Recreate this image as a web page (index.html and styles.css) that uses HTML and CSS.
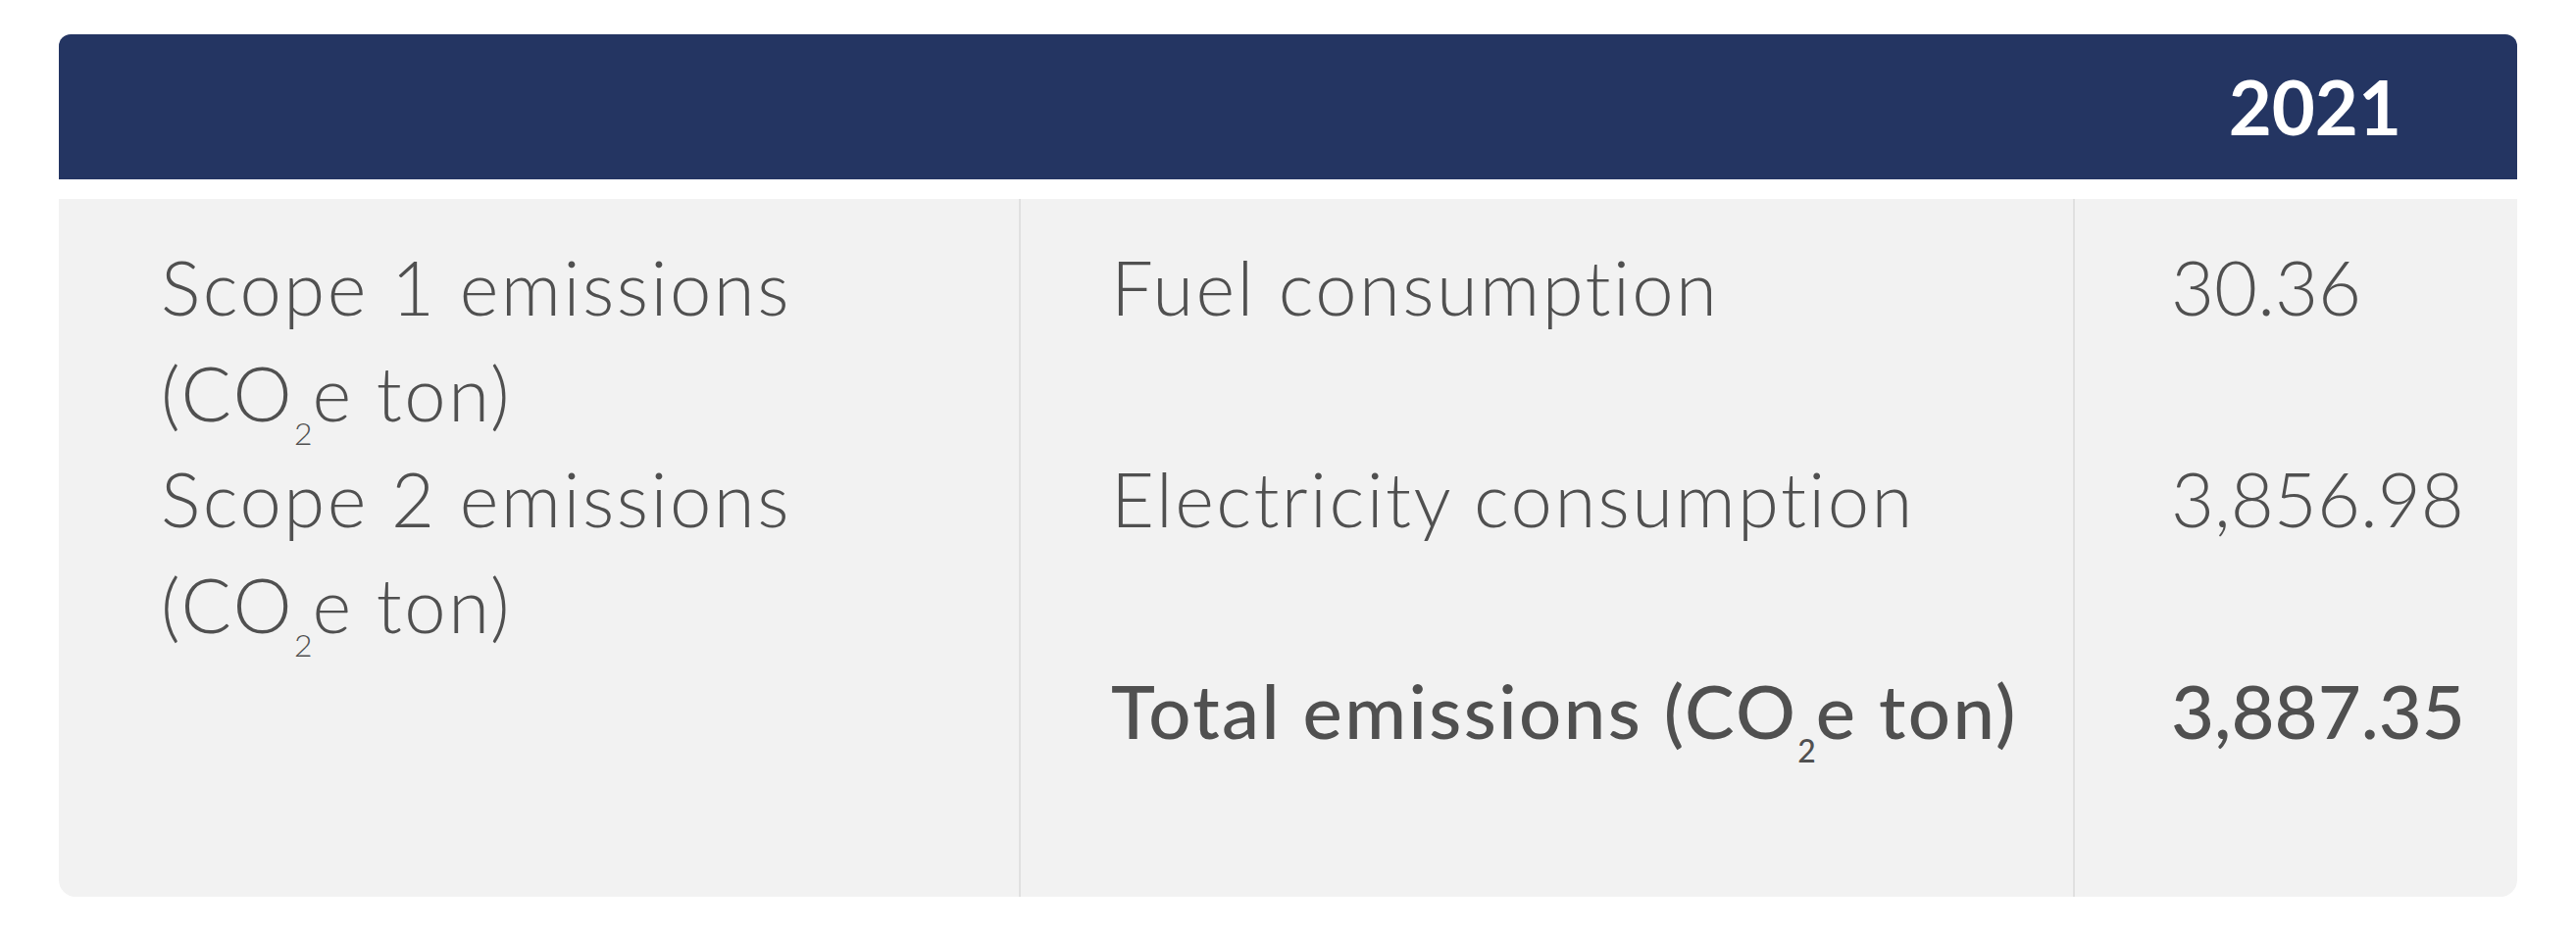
FILE: index.html
```html
<!DOCTYPE html>
<html lang="en">
<head>
<meta charset="utf-8">
<title>Emissions 2021</title>
<link rel="stylesheet" href="styles.css">
</head>
<body>
<div class="table">
  <div class="head"><span class="year">2021</span></div>
  <div class="body">
    <div class="cell c1 first">Scope 1 emissions<br>(CO<sub>2</sub>e ton)</div>
    <div class="cell c2 first">Fuel consumption</div>
    <div class="cell c3 first">30.36</div>
    <div class="cell c1">Scope 2 emissions<br>(CO<sub>2</sub>e ton)</div>
    <div class="cell c2">Electricity consumption</div>
    <div class="cell c3">3,856.98</div>
    <div class="cell c1"></div>
    <div class="cell c2 strong">Total emissions (CO<sub>2</sub>e ton)</div>
    <div class="cell c3 strong">3,887.35</div>
  </div>
</div>
</body>
</html>
```
FILE: styles.css
```css
html, body { margin: 0; padding: 0; background: #ffffff; }
body { padding: 35px 60px 0 60px; }
.table { width: 2507px; }
.head {
  height: 148px;
  background: #243562;
  border-radius: 12px 12px 0 0;
  display: flex;
  align-items: center;
  justify-content: flex-end;
  padding-right: 118px;
  box-sizing: border-box;
}
.year {
  font-family: "Lato", "Liberation Sans", sans-serif;
  font-weight: 700;
  font-size: 76px;
  color: #ffffff;
  line-height: 1;
}
.body {
  margin-top: 20px;
  height: 712px;
  background: #f2f2f2;
  border-radius: 0 0 17px 17px;
  display: grid;
  grid-template-columns: 979px 1075px 1fr;
  grid-template-rows: 252px 216px 1fr;
  font-family: "Lato", "Liberation Sans", sans-serif;
  font-weight: 300;
  font-size: 76px;
  line-height: 108px;
  color: #505050;
}
.cell { padding-left: 100px; }
.c1 { padding-left: 104px; letter-spacing: 2.5px; }
.c2 { border-left: 2px solid #e0e0e0; padding-left: 92px; letter-spacing: 2.4px; }
.c3 { border-left: 2px solid #e0e0e0; padding-left: 98px; }
.first { padding-top: 36px; }
.strong { font-weight: 500; }
sub {
  font-size: 0.42em;
  vertical-align: -0.75em;
  line-height: 0;
  letter-spacing: 0;
}
```
